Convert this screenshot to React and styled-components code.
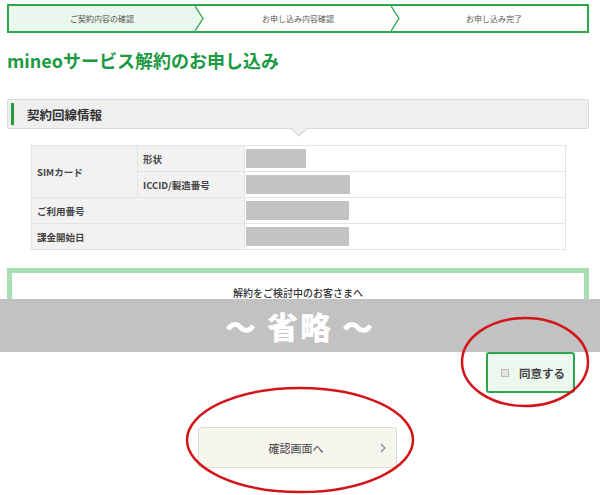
import styled, { createGlobalStyle } from "styled-components";

const Global = createGlobalStyle`
  body {
    margin: 0;
    background: #fff;
    font-family: "Noto Sans CJK JP", "Noto Sans", sans-serif;
    color: #333;
  }
`;

const Page = styled.div`
  position: relative;
  width: 600px;
  height: 495px;
  overflow: hidden;
  padding-top: 4px;
  box-sizing: border-box;
`;

const Inner = styled.div`
  padding: 0 11px 0 7px;
`;

const Stepper = styled.div`
  display: flex;
  height: 29px;
  border: 2px solid #2ea64c;
  box-sizing: border-box;
`;

const Step = styled.div`
  flex: 1;
  display: flex;
  align-items: center;
  justify-content: center;
  font-size: 8px;
  color: #555;
  background: ${(p) => (p.$active ? "#e9f7ec" : "#fff")};
`;

const Chevron = styled.svg`
  flex: none;
  width: 10px;
  height: 25px;
  display: block;
`;

const Title = styled.h1`
  margin: 14px 0 0;
  font-size: 18px;
  line-height: 26px;
  font-weight: 700;
  color: #1b9a43;
`;

const SectionHead = styled.div`
  position: relative;
  margin-top: 26px;
  height: 30px;
  display: flex;
  align-items: center;
  background: #efefef;
  border: 1px solid #dadada;
  border-radius: 2px;
  box-sizing: border-box;
  padding-left: 3px;

  &::before,
  &::after {
    content: "";
    position: absolute;
    left: 283px;
    width: 0;
    height: 0;
    border-left: 8px solid transparent;
    border-right: 8px solid transparent;
  }
  &::before {
    top: 29px;
    border-top: 8px solid #dadada;
  }
  &::after {
    top: 28px;
    left: 284px;
    border-left-width: 7px;
    border-right-width: 7px;
    border-top: 7px solid #efefef;
  }
`;

const GreenBar = styled.span`
  width: 3px;
  height: 22px;
  background: #1f9e3e;
`;

const SectionText = styled.span`
  margin-left: 13px;
  font-size: 12.5px;
  font-weight: 700;
  color: #333;
`;

const Table = styled.table`
  margin: 16px 0 0 24px;
  width: 535px;
  border-collapse: collapse;
  font-size: 9.5px;
  font-weight: 700;
  color: #444;
`;

const Th = styled.th`
  background: #f2f2f2;
  border: 1px solid #e3e3e3;
  text-align: left;
  font-weight: 700;
  padding: 0 5px;
  height: 25px;
  width: ${(p) => p.$w || "auto"};
  box-sizing: border-box;
`;

const Td = styled.td`
  border: 1px solid #e3e3e3;
  padding: 0 1px;
  height: 25px;
`;

const Mask = styled.div`
  width: ${(p) => p.$w}px;
  height: 19px;
  background: #c3c3c3;
`;

const NoticeBox = styled.div`
  margin-top: 18px;
  height: 32px;
  border: 5px solid #a9deb3;
  border-bottom: none;
  box-sizing: border-box;
  display: flex;
  justify-content: center;
  align-items: flex-end;
  font-size: 10px;
  color: #333;
  font-weight: 500;
`;

const Omitted = styled.div`
  margin-top: -1px;
  height: 53px;
  background: #c2c2c2;
  display: flex;
  align-items: center;
  justify-content: center;
  color: #fff;
  font-size: 31px;
  font-weight: 900;
  letter-spacing: 2px;
`;

const AgreeRow = styled.div`
  display: flex;
  justify-content: flex-end;
  padding-right: 25px;
`;

const AgreeButton = styled.label`
  width: 89px;
  height: 41px;
  box-sizing: border-box;
  border: 2px solid #2ea64c;
  border-radius: 3px;
  background: #ecf7ee;
  display: flex;
  align-items: center;
  padding-left: 13px;
  gap: 10px;
  font-size: 11.5px;
  font-weight: 700;
  color: #444;
`;

const Check = styled.span`
  width: 6px;
  height: 6px;
  border: 1px solid #bbb;
  background: #e4e4e4;
`;

const ConfirmRow = styled.div`
  display: flex;
  justify-content: center;
  margin-top: 34px;
  padding-right: 6px;
`;

const ConfirmButton = styled.button`
  width: 199px;
  height: 41px;
  border: 1px solid #dcdcd4;
  border-radius: 3px;
  background: #f7f6ee;
  display: flex;
  align-items: center;
  padding: 0 10px 0 0;
  font-family: inherit;
  font-size: 11px;
  color: #444;
`;

const ConfirmLabel = styled.span`
  flex: 1;
  text-align: center;
  padding-left: 14px;
`;

const Annotations = styled.svg`
  position: absolute;
  left: 0;
  top: 0;
  width: 600px;
  height: 495px;
  pointer-events: none;
`;

function Arrow({ fill }) {
  return (
    <Chevron viewBox="0 0 10 25" preserveAspectRatio="none">
      <polygon points="0,0 0,25 10,25 10,0" fill="#fff" />
      <polygon points="0,0 8,12.5 0,25" fill={fill} />
      <polyline points="0,0 8,12.5 0,25" fill="none" stroke="#2ea64c" strokeWidth="1.3" />
    </Chevron>
  );
}

export default function App() {
  return (
    <>
      <Global />
      <Page>
        <Inner>
          <Stepper>
            <Step $active>ご契約内容の確認</Step>
            <Arrow fill="#e9f7ec" />
            <Step>お申し込み内容確認</Step>
            <Arrow fill="#fff" />
            <Step>お申し込み完了</Step>
          </Stepper>

          <Title>mineoサービス解約のお申し込み</Title>

          <SectionHead>
            <GreenBar />
            <SectionText>契約回線情報</SectionText>
          </SectionHead>

          <Table>
            <tbody>
              <tr>
                <Th rowSpan={2} $w="106px">SIMカード</Th>
                <Th $w="107px">形状</Th>
                <Td><Mask $w={60} /></Td>
              </tr>
              <tr>
                <Th>ICCID/製造番号</Th>
                <Td><Mask $w={104} /></Td>
              </tr>
              <tr>
                <Th colSpan={2}>ご利用番号</Th>
                <Td><Mask $w={103} /></Td>
              </tr>
              <tr>
                <Th colSpan={2}>課金開始日</Th>
                <Td><Mask $w={103} /></Td>
              </tr>
            </tbody>
          </Table>

          <NoticeBox>解約をご検討中のお客さまへ</NoticeBox>
        </Inner>

        <Omitted>〜 省略 〜</Omitted>

        <AgreeRow>
          <AgreeButton>
            <Check />
            同意する
          </AgreeButton>
        </AgreeRow>

        <ConfirmRow>
          <ConfirmButton>
            <ConfirmLabel>確認画面へ</ConfirmLabel>
            <svg width="6" height="10" viewBox="0 0 6 10">
              <polyline points="1,1 5,5 1,9" fill="none" stroke="#888" strokeWidth="1.2" />
            </svg>
          </ConfirmButton>
        </ConfirmRow>

        <Annotations viewBox="0 0 600 495">
          <ellipse cx="525" cy="362" rx="63" ry="44" fill="none" stroke="#d3141b" strokeWidth="2.5" />
          <ellipse cx="300" cy="440" rx="113" ry="52" fill="none" stroke="#d3141b" strokeWidth="2.5" />
        </Annotations>
      </Page>
    </>
  );
}
